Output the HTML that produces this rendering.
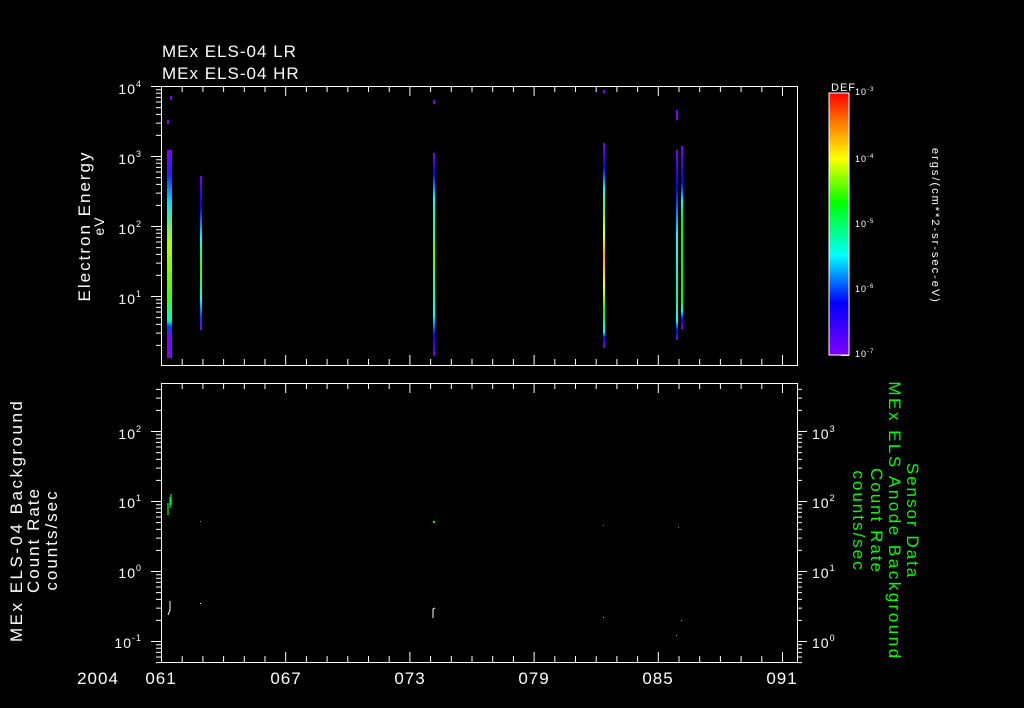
<!DOCTYPE html>
<html><head><meta charset="utf-8"><style>
html,body{margin:0;padding:0;background:#000;width:1024px;height:708px;overflow:hidden}
svg{display:block}
text{font-family:"Liberation Sans",sans-serif;fill:#fff;letter-spacing:1px}
</style></head><body>
<svg id="s" width="1024" height="708" viewBox="0 0 1024 708" xmlns="http://www.w3.org/2000/svg">
<defs>
<linearGradient id="cb" x1="0" y1="1" x2="0" y2="0">
<stop offset="0" stop-color="#8000ff"/><stop offset="0.2" stop-color="#0000ff"/><stop offset="0.38" stop-color="#00ffff"/><stop offset="0.58" stop-color="#00ff00"/><stop offset="0.75" stop-color="#ffff00"/><stop offset="0.88" stop-color="#ff8000"/><stop offset="1" stop-color="#ff0000"/>
</linearGradient>
<linearGradient id="g1" x1="0" y1="0" x2="0" y2="1">
<stop offset="0" stop-color="#8000ff"/><stop offset="0.12" stop-color="#2020ff"/><stop offset="0.25" stop-color="#00e0ff"/><stop offset="0.45" stop-color="#b0ff00"/><stop offset="0.7" stop-color="#40ff00"/><stop offset="0.82" stop-color="#00ffc0"/><stop offset="0.85" stop-color="#0040ff"/><stop offset="0.9" stop-color="#8000ff"/><stop offset="1" stop-color="#8000ff"/>
</linearGradient>
<linearGradient id="g2" x1="0" y1="0" x2="0" y2="1">
<stop offset="0" stop-color="#8000ff"/><stop offset="0.2" stop-color="#0000ff"/><stop offset="0.4" stop-color="#00ffff"/><stop offset="0.6" stop-color="#40ff00"/><stop offset="0.8" stop-color="#00ffff"/><stop offset="0.92" stop-color="#0040ff"/><stop offset="1" stop-color="#8000ff"/>
</linearGradient>
<linearGradient id="g3" x1="0" y1="0" x2="0" y2="1">
<stop offset="0" stop-color="#8000ff"/><stop offset="0.1" stop-color="#0000ff"/><stop offset="0.22" stop-color="#00ffff"/><stop offset="0.5" stop-color="#60ff00"/><stop offset="0.8" stop-color="#00ffff"/><stop offset="0.9" stop-color="#0000ff"/><stop offset="1" stop-color="#8000ff"/>
</linearGradient>
<linearGradient id="g4" x1="0" y1="0" x2="0" y2="1">
<stop offset="0" stop-color="#8000ff"/><stop offset="0.12" stop-color="#0000ff"/><stop offset="0.22" stop-color="#00ffff"/><stop offset="0.35" stop-color="#80ff00"/><stop offset="0.45" stop-color="#ffff00"/><stop offset="0.55" stop-color="#ffa000"/><stop offset="0.7" stop-color="#ffff00"/><stop offset="0.82" stop-color="#00ff00"/><stop offset="0.92" stop-color="#00ffff"/><stop offset="0.95" stop-color="#0000ff"/><stop offset="1" stop-color="#8000ff"/>
</linearGradient>
<linearGradient id="g5" x1="0" y1="0" x2="0" y2="1">
<stop offset="0" stop-color="#8000ff"/><stop offset="0.2" stop-color="#0000ff"/><stop offset="0.45" stop-color="#00ffff"/><stop offset="0.8" stop-color="#00ffa0"/><stop offset="0.9" stop-color="#00ffff"/><stop offset="0.95" stop-color="#0000ff"/><stop offset="1" stop-color="#8000ff"/>
</linearGradient>
<linearGradient id="g6" x1="0" y1="0" x2="0" y2="1">
<stop offset="0" stop-color="#8000ff"/><stop offset="0.2" stop-color="#0000ff"/><stop offset="0.3" stop-color="#00ffff"/><stop offset="0.4" stop-color="#00ff00"/><stop offset="0.85" stop-color="#00ff00"/><stop offset="0.9" stop-color="#00ffff"/><stop offset="0.95" stop-color="#0000ff"/><stop offset="1" stop-color="#8000ff"/>
</linearGradient>
</defs>
<g id="ticks" stroke="#fff" stroke-width="1" fill="none"></g>
<rect x="161.5" y="86.5" width="636" height="279" stroke="#fff" fill="none"/>
<rect x="161.5" y="383.5" width="636" height="279" stroke="#fff" fill="none"/>
<text x="162" y="57" font-size="17">MEx ELS-04 LR</text>
<text x="162" y="79" font-size="17">MEx ELS-04 HR</text>
<g font-size="14" text-anchor="end">
<text x="142" y="94">10<tspan font-size="9" dy="-7">4</tspan></text>
<text x="142" y="164">10<tspan font-size="9" dy="-7">3</tspan></text>
<text x="142" y="234">10<tspan font-size="9" dy="-7">2</tspan></text>
<text x="142" y="304">10<tspan font-size="9" dy="-7">1</tspan></text>
<text x="142" y="439">10<tspan font-size="9" dy="-7">2</tspan></text>
<text x="142" y="508">10<tspan font-size="9" dy="-7">1</tspan></text>
<text x="142" y="578">10<tspan font-size="9" dy="-7">0</tspan></text>
<text x="142" y="648">10<tspan font-size="9" dy="-7">-1</tspan></text>
</g>
<g font-size="14">
<text x="812" y="439">10<tspan font-size="9" dy="-7">3</tspan></text>
<text x="812" y="508">10<tspan font-size="9" dy="-7">2</tspan></text>
<text x="812" y="578">10<tspan font-size="9" dy="-7">1</tspan></text>
<text x="812" y="648">10<tspan font-size="9" dy="-7">0</tspan></text>
</g>
<g font-size="17" text-anchor="middle">
<text x="98" y="684">2004</text>
<text x="161" y="684">061</text>
<text x="286" y="684">067</text>
<text x="410" y="684">073</text>
<text x="534" y="684">079</text>
<text x="658" y="684">085</text>
<text x="782" y="684">091</text>
</g>
<text transform="translate(90,226) rotate(-90)" font-size="17" text-anchor="middle" style="letter-spacing:2px">Electron Energy</text>
<text transform="translate(104,226) rotate(-90)" font-size="14" text-anchor="middle">eV</text>
<text transform="translate(22,642) rotate(-90)" font-size="17" style="letter-spacing:2.5px">MEx ELS-04 Background</text>
<text transform="translate(39,540) rotate(-90)" font-size="17" text-anchor="middle" style="letter-spacing:2px">Count Rate</text>
<text transform="translate(57,540) rotate(-90)" font-size="17" text-anchor="middle" style="letter-spacing:2px">counts/sec</text>
<g font-size="17" text-anchor="middle">
<text transform="translate(907,521) rotate(90)" style="fill:#00ff00;letter-spacing:2px">Sensor Data</text>
<text transform="translate(889,521) rotate(90)" style="fill:#00ff00;letter-spacing:2.5px">MEx ELS Anode Background</text>
<text transform="translate(871,521) rotate(90)" style="fill:#00ff00;letter-spacing:2px">Count Rate</text>
<text transform="translate(853,521) rotate(90)" style="fill:#00ff00;letter-spacing:2px">counts/sec</text>
</g>
<rect x="829" y="93" width="20" height="262" fill="url(#cb)" stroke="#fff"/>
<text x="831" y="91" font-size="11">DEF</text>
<g font-size="9">
<text x="855" y="95">10<tspan font-size="6" dy="-4">-3</tspan></text>
<text x="855" y="162">10<tspan font-size="6" dy="-4">-4</tspan></text>
<text x="855" y="227">10<tspan font-size="6" dy="-4">-5</tspan></text>
<text x="855" y="292">10<tspan font-size="6" dy="-4">-6</tspan></text>
<text x="855" y="357">10<tspan font-size="6" dy="-4">-7</tspan></text>
</g>
<text transform="translate(932,148) rotate(90)" font-size="11" style="letter-spacing:2px">ergs/(cm**2-sr-sec-eV)</text>
<rect x="167" y="150" width="5" height="208" fill="url(#g1)"/>
<rect x="167" y="120" width="2" height="4" fill="#8000ff"/>
<rect x="170" y="96" width="2" height="4" fill="#8000ff"/>
<rect x="200" y="176" width="2" height="154" fill="url(#g2)"/>
<rect x="433" y="153" width="2" height="203" fill="url(#g3)"/>
<rect x="433" y="100" width="2" height="4" fill="#8000ff"/>
<rect x="603" y="143" width="2" height="205" fill="url(#g4)"/>
<rect x="603" y="90" width="2" height="3" fill="#8000ff"/>
<rect x="676" y="150" width="2" height="190" fill="url(#g5)"/>
<rect x="676" y="110" width="2" height="10" fill="#8000ff"/>
<rect x="681" y="146" width="2" height="183" fill="url(#g6)"/>
<path d="M168 515 V503 M170 508 V497 M171 505 V494" stroke="#00ff00" stroke-width="1.2"/>
<rect x="200" y="521" width="1" height="1" fill="#00ff00"/>
<rect x="433" y="521" width="2" height="2" fill="#00ff00"/>
<rect x="603" y="525" width="1" height="1" fill="#888"/>
<rect x="678" y="527" width="1" height="1" fill="#888"/>
<path d="M168 615 L170 610 V601 M433 618 V609 L435 608" stroke="#fff" stroke-width="1"/>
<rect x="200" y="603" width="1" height="1" fill="#fff"/>
<rect x="603" y="617" width="1" height="1" fill="#aaa"/>
<rect x="681" y="620" width="1" height="1" fill="#aaa"/>
<rect x="676" y="635" width="1" height="1" fill="#aaa"/>
</svg>
<script>
(function(){
var d="";
var day=20.7;
for(var i=0;i<=31;i++){var x=161.5+i*day;if(x>797)break;var L=(i%6==0)?10:6;
d+="M"+x+" 86V"+(86+L)+"M"+x+" 365V"+(365-L)+"M"+x+" 383V"+(383+L)+"M"+x+" 662V"+(662-L);}
function logt(x0,dir,ytop,ybot,y10){
for(var k=-6;k<8;k++){for(var m=1;m<10;m++){var y=y10-70*(k+Math.log10(m));if(y<ytop-0.5||y>ybot+0.5)continue;var L=(m==1)?10:5;d+="M"+x0+" "+(y+0.5)+"H"+(x0+dir*L);}}}
logt(161,-1,86,365,86);
logt(161,-1,383,662,431);
logt(797,1,383,662,431);
for(var k=0;k<4;k++){for(var m=1;m<10;m++){var y=355-65.5*(k+Math.log10(m));d+="M849 "+(y+0.5)+"H"+(m==1?841:845);}}
var p=document.createElementNS("http://www.w3.org/2000/svg","path");p.setAttribute("d",d);
document.getElementById("ticks").appendChild(p);
})();
</script>
</body></html>
